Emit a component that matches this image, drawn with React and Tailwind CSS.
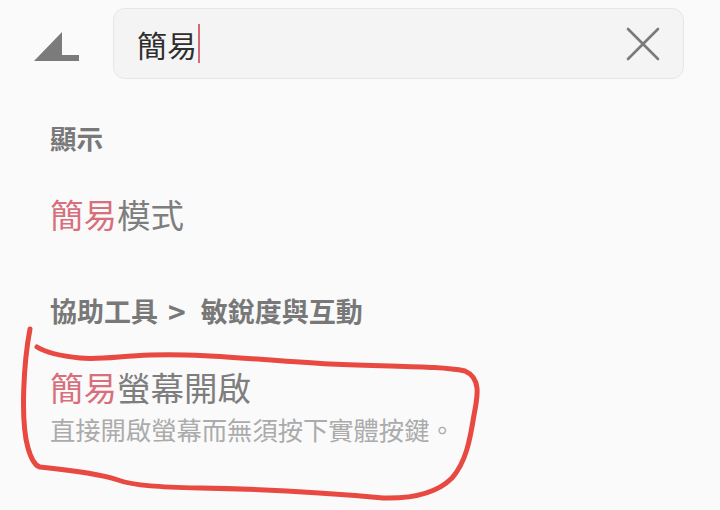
import React from 'react';

const cjk = { fontFamily: '"Noto Sans CJK TC", "Noto Sans", sans-serif' };

const BackIcon = () => (
  <svg width="46" height="31" viewBox="0 0 46 31" className="shrink-0">
    <polygon points="0,29 28,0 28,23 45,23 45,29" fill="#7b7b7b" />
  </svg>
);

const ClearIcon = () => (
  <svg width="34" height="34" viewBox="0 0 34 34">
    <path d="M2 2 L32 32 M32 2 L2 32" stroke="#7a7a7a" strokeWidth="2.6" strokeLinecap="round" />
  </svg>
);

const Hl = ({ children }) => <span className="text-[#d86f7c]">{children}</span>;

export default function App() {
  return (
    <div className="relative w-[720px] h-[510px] overflow-hidden bg-[#fafafa]" style={cjk}>
      {/* Search bar */}
      <div className="flex items-center pt-2 pl-[34px]">
        <div className="mt-[8px]">
          <BackIcon />
        </div>
        <div className="ml-[33px] flex items-center w-[571px] h-[71px] rounded-[12px] border border-[#e6e6e6] bg-[#f4f4f4] pl-[23px] pr-[23px]">
          <div className="flex items-center flex-1">
            <span className="text-[30px] leading-[40px] text-[#2e2e2e]">簡易</span>
            <span className="ml-[1px] w-[2px] h-[39px] bg-[#d46a78]" />
          </div>
          <ClearIcon />
        </div>
      </div>

      {/* Results */}
      <div className="pl-[50px]">
        <div className="mt-[39px] text-[26.5px] leading-[40px] font-bold text-[#787878]">顯示</div>
        <div className="mt-[36px] text-[33.5px] leading-[40px] text-[#7e7e7e]">
          <Hl>簡易</Hl>模式
        </div>
        <div className="mt-[57px] flex items-center text-[27px] leading-[40px] font-bold text-[#787878]">
          <span>協助工具</span>
          <span className="ml-[10px] mr-[15px] text-[30px] leading-[40px] font-semibold">&gt;</span>
          <span>敏銳度與互動</span>
        </div>
        <div className="mt-[36px] text-[33.5px] leading-[40px] text-[#7e7e7e]">
          <Hl>簡易</Hl>螢幕開啟
        </div>
        <div className="mt-[7px] text-[25.3px] leading-[30px] text-[#ababab]">直接開啟螢幕而無須按下實體按鍵。</div>
      </div>

      {/* Hand-drawn circle annotation */}
      <svg className="absolute inset-0 pointer-events-none" width="720" height="510" viewBox="0 0 720 510">
        <path
          d="M30 329 C24 360, 20 420, 28 448 C32 462, 36 466, 40 467 C70 470, 100 474, 118 480 C135 486, 160 487, 200 488 C260 489, 330 493, 383 498 C420 499, 440 490, 452 478 C466 462, 470 440, 474 415 C478 395, 481 378, 465 371 C440 366, 400 367, 330 364 C260 360, 200 353, 150 355 C120 356, 100 360, 80 358 C60 356, 45 352, 37 347"
          fill="none"
          stroke="#e84a42"
          strokeWidth="5"
          strokeLinecap="round"
          strokeLinejoin="round"
        />
      </svg>
    </div>
  );
}
